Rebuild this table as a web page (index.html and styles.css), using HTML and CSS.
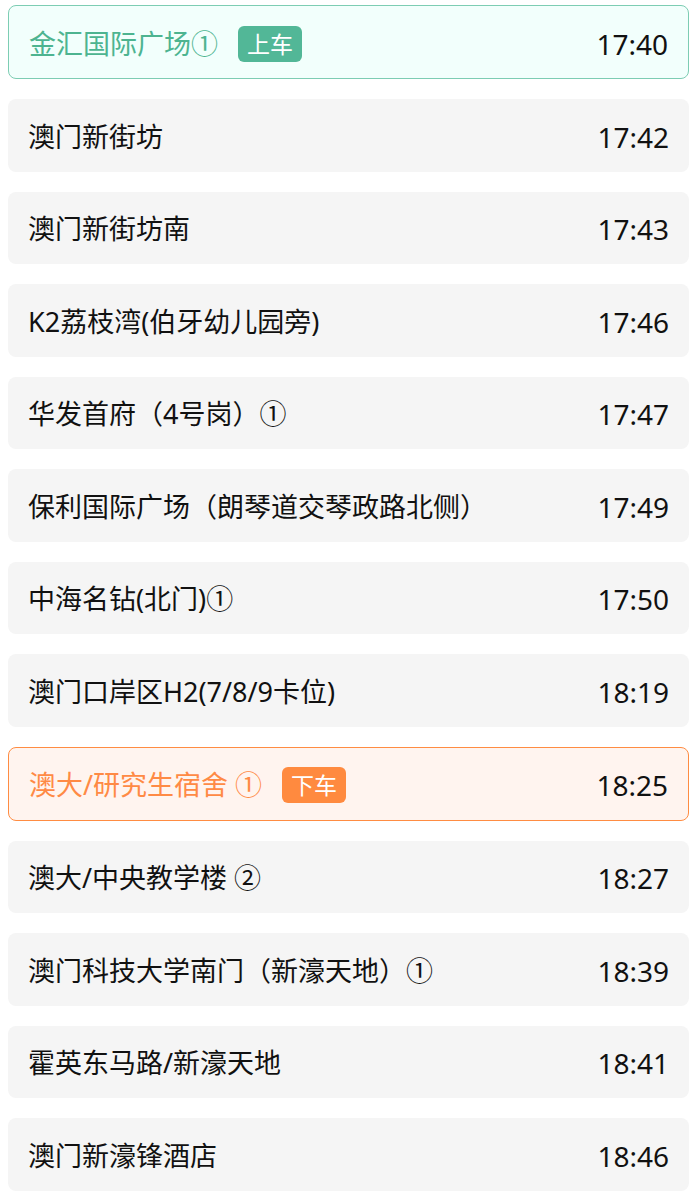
FILE: index.html
```html
<!DOCTYPE html>
<html lang="zh-CN">
<head>
    <meta charset="UTF-8">
    <meta name="viewport" content="width=device-width, initial-scale=1.0">
    <title>站点时刻</title>
    <link rel="stylesheet" href="styles.css">
</head>
<body>
    <ul class="stops">
        <li class="stop board">
            <span class="name">金汇国际广场①<span class="tag">上车</span></span>
            <span class="time">17:40</span>
        </li>
        <li class="stop">
            <span class="name">澳门新街坊</span>
            <span class="time">17:42</span>
        </li>
        <li class="stop">
            <span class="name">澳门新街坊南</span>
            <span class="time">17:43</span>
        </li>
        <li class="stop">
            <span class="name">K2荔枝湾(伯牙幼儿园旁)</span>
            <span class="time">17:46</span>
        </li>
        <li class="stop">
            <span class="name">华发首府（4号岗）①</span>
            <span class="time">17:47</span>
        </li>
        <li class="stop">
            <span class="name">保利国际广场（朗琴道交琴政路北侧）</span>
            <span class="time">17:49</span>
        </li>
        <li class="stop">
            <span class="name">中海名钻(北门)①</span>
            <span class="time">17:50</span>
        </li>
        <li class="stop">
            <span class="name">澳门口岸区H2(7/8/9卡位)</span>
            <span class="time">18:19</span>
        </li>
        <li class="stop alight">
            <span class="name">澳大/研究生宿舍 ①<span class="tag">下车</span></span>
            <span class="time">18:25</span>
        </li>
        <li class="stop">
            <span class="name">澳大/中央教学楼 ②</span>
            <span class="time">18:27</span>
        </li>
        <li class="stop">
            <span class="name">澳门科技大学南门（新濠天地）①</span>
            <span class="time">18:39</span>
        </li>
        <li class="stop">
            <span class="name">霍英东马路/新濠天地</span>
            <span class="time">18:41</span>
        </li>
        <li class="stop">
            <span class="name">澳门新濠锋酒店</span>
            <span class="time">18:46</span>
        </li>
    </ul>
</body>
</html>
```

FILE: styles.css
```css
body {
    margin: 0;
    padding: 5px 7px 0 8px;
    background: #fff;
    font-family: "Noto Sans", "Noto Sans CJK SC", sans-serif;
    color: #111;
}
.stops {
    list-style: none;
    margin: 0;
    padding: 0;
    display: flex;
    flex-direction: column;
    gap: 20px;
}
.stop {
    display: flex;
    align-items: center;
    justify-content: space-between;
    padding: 19.75px 20px 16.75px;
    background-color: #f5f5f5;
    border-radius: 8px;
    font-size: 27px;
    line-height: 36px;
}
.stop .name {
    display: flex;
    align-items: center;
}
.stop .time {
    font-size: 28px;
}
.tag {
    display: inline-block;
    margin-left: 20px;
    padding: 0 9px;
    border-radius: 6px;
    color: #fff;
    font-size: 23px;
    line-height: 36px;
}
.stop.board {
    padding-top: 19.5px;
    padding-bottom: 16.5px;
    background-color: #f2fffc;
    border: 1px solid #7dcdb3;
    color: #4db490;
}
.stop.board .tag {
    background-color: #52b797;
}
.stop.alight {
    padding-top: 19.5px;
    padding-bottom: 16.5px;
    background-color: #fff4ef;
    border: 1px solid #ff8c42;
    color: #ff8a45;
}
.stop.alight .tag {
    background-color: #ff8a3f;
}
.stop.board .time,
.stop.alight .time {
    color: #111;
}
```
